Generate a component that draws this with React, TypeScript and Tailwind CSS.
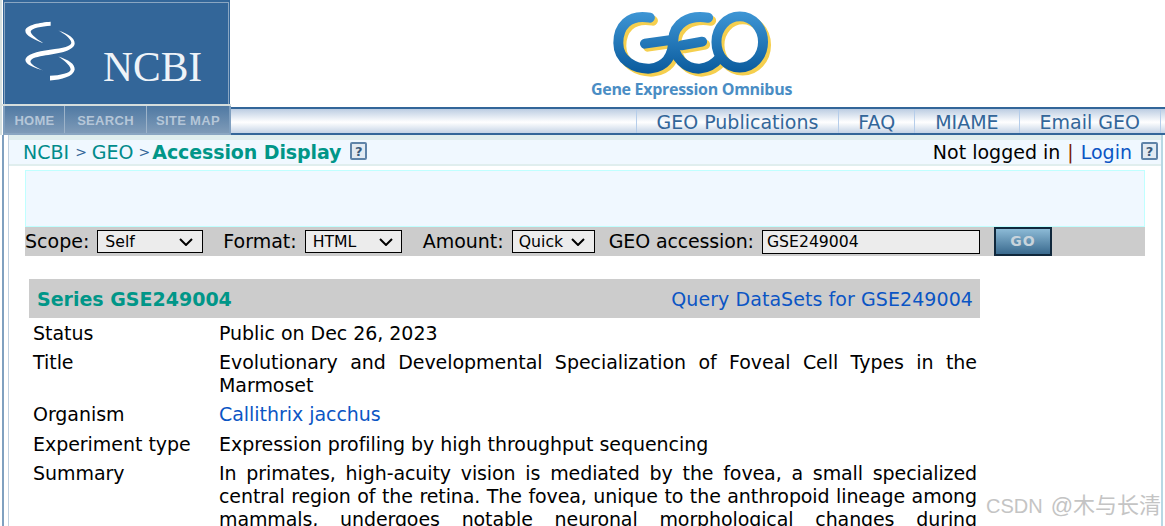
const font = "[font-family:'DejaVu_Sans',Verdana,sans-serif]";

function HelpIcon() {
  return (
    <span className="mb-[2px] inline-flex h-[18px] w-[17px] items-center justify-center rounded-[2px] border-2 border-[#5f83a8] bg-[#e2eaf2] text-[13px] leading-none font-bold text-[#3a5a7a]">
      ?
    </span>
  );
}

function Chevron() {
  return (
    <svg width="14" height="8" viewBox="0 0 14 8" className="shrink-0">
      <path d="M1 1 L7 7 L13 1" fill="none" stroke="#000" strokeWidth="2" />
    </svg>
  );
}

function NcbiLogo() {
  return (
    <div className="ml-[1px] h-[104px] w-[227px] shrink-0 bg-[#336699] pt-[2px] pr-[1px] pl-[1px]">
      <div className="flex h-full items-start border-x border-t border-[#8aa6c2]">
        <svg width="60" height="67" viewBox="60 55 180 200" className="mt-[15px] ml-[15px] shrink-0">
          <g fill="#fff">
            <path d="M152 66 L152 78 C125 80 95 85 92 95 C92 105 115 120 130 130 C105 120 75 108 76 92 C78 76 120 68 152 66 Z" />
            <path d="M175 92 C205 102 225 115 224 132 C220 155 170 162 130 168 C105 172 88 178 92 188 C96 196 115 206 130 212 C105 205 76 195 76 180 C78 165 110 155 150 150 C190 144 214 140 214 128 C212 115 190 100 175 92 Z" />
            <path d="M175 170 C205 180 226 192 224 210 C220 230 185 240 150 242 L150 228 C180 226 212 220 212 208 C210 195 190 180 175 170 Z" />
          </g>
        </svg>
        <span className="mt-[44px] ml-[23px] text-[41.5px] leading-none text-[#eef3f8] [font-family:'Liberation_Serif',serif]">
          NCBI
        </span>
      </div>
    </div>
  );
}

function GeoLogo() {
  const strokes = (
    <>
      <path d="M235 52 C170 40 140 80 140 128 C140 180 190 207 235 205 C280 200 305 170 305 118 L220 130" />
      <path d="M410 52 C350 42 308 70 305 118 C305 175 345 207 385 205 C410 203 430 190 445 172" />
      <path d="M330 135 L392 124" />
      <ellipse cx="505" cy="125" rx="70" ry="77" />
    </>
  );
  return (
    <div className="flex flex-col items-center">
      <svg width="173" height="70" viewBox="100 20 520 210" className="mt-[7px]">
        <defs>
          <linearGradient id="geoBlue" gradientUnits="userSpaceOnUse" x1="0" y1="30" x2="0" y2="220">
            <stop offset="0" stopColor="#3f97d6" />
            <stop offset="1" stopColor="#0a5a9c" />
          </linearGradient>
        </defs>
        <g fill="none" strokeLinecap="round" strokeWidth="30">
          <g stroke="#f5cf4e" transform="translate(9 9)">
            {strokes}
          </g>
          <g stroke="url(#geoBlue)">{strokes}</g>
        </g>
      </svg>
      <span className="mt-[3px] text-[16px] leading-[18px] font-bold tracking-[-0.3px] whitespace-nowrap text-[#4a8dc4] [font-family:'Open_Sans',sans-serif]">
        Gene Expression Omnibus
      </span>
    </div>
  );
}

function Row({ label, children }: { label: string; children: React.ReactNode }) {
  return (
    <div className="flex py-[3.15px] tracking-[-0.04px]">
      <div className="w-[190px] shrink-0 pl-[4px]">{label}</div>
      <div className="w-[758px] text-justify">{children}</div>
    </div>
  );
}

const summaryLines = [
  "In primates, high-acuity vision is mediated by the fovea, a small specialized",
  "central region of the retina. The fovea, unique to the anthropoid lineage among",
  "mammals, undergoes notable neuronal morphological changes during",
];

export default function App() {
  return (
    <div className={`relative h-[526px] w-[1165px] overflow-hidden bg-white text-[19px] leading-[23px] text-black ${font}`}>
      {/* Top banner */}
      <div className="flex h-[104px] border-l-2 border-[#d5e0e0]">
        <NcbiLogo />
        <div className="flex flex-1 justify-center pr-[12px]">
          <GeoLogo />
        </div>
      </div>
      <div className="h-[2px] w-[231px] bg-[#d5dedd]" />

      {/* Nav strip */}
      <div className="flex h-[29px] items-stretch border-l-2 border-[#d5e0e0]">
        <div className="ml-[1px] flex w-[228px] shrink-0 border-x-2 border-b-2 border-x-[#7f9fbf] border-b-[#8aa6c2] bg-[linear-gradient(#4f79a3,#7f9bb8)] text-[13px] leading-[30px] font-bold tracking-[0.3px] text-[#b5c6d8] [font-family:'Liberation_Sans',sans-serif]">
          <div className="w-[60px] border-r border-[#9db3c9] text-center">HOME</div>
          <div className="w-[82px] border-r border-[#9db3c9] text-center">SEARCH</div>
          <div className="flex-1 text-center">SITE MAP</div>
        </div>
        <div className="mt-[1px] flex flex-1 justify-end border-y-2 border-[#336699] bg-[linear-gradient(#bccde2,#ffffff_55%,#c5d4e6)] pr-[4px] leading-[27px] text-[#336699]">
          <div className="border-l border-[#b5cdea] pr-[20px] pl-[19px]">GEO Publications</div>
          <div className="border-l border-[#b5cdea] px-[19px]">FAQ</div>
          <div className="border-l border-[#b5cdea] px-[20px]">MIAME</div>
          <div className="border-x border-[#b5cdea] px-[20px]">Email GEO</div>
        </div>
      </div>

      {/* Framed content */}
      <div className="ml-[2px] h-[391px] w-[1161px] border-x-2 border-l-[#7fa0c0] border-r-[#b8d8e4] pl-[4px]">
        <div className="h-full border-l border-[#c0d0e0]">
          <div className="flex h-[31px] items-center justify-between border-t-[5px] border-b-2 border-t-[#e0eeee] border-b-[#e0eeee] bg-[#f0f8ff] pr-[3px] pl-[14px]">
            <div className="flex items-center">
              <span className="text-[#008b8b]">NCBI</span>
              <span className="mr-[5px] ml-[6px] text-[14px] text-[#336699]">&gt;</span>
              <span className="text-[#008b8b]">GEO</span>
              <span className="mr-[2px] ml-[5px] text-[14px] text-[#336699]">&gt;</span>
              <span className="mr-[9px] font-bold tracking-[-0.1px] text-[#009688]">Accession Display</span>
              <HelpIcon />
            </div>
            <div className="flex items-center">
              <span className="mt-[1px]">Not logged in</span>
              <span className="mx-[7px] mt-[1px] text-[#7a1f00]">|</span>
              <span className="mt-[1px] mr-[9px] text-[#0b55c4]">Login</span>
              <HelpIcon />
            </div>
          </div>

          {/* Search form */}
          <div className="ml-[16px] w-[1120px] pt-[4px]">
            <div className="h-[57px] border border-[#c0ffff] bg-[#f0f8ff]" />
            <div className="flex h-[29px] items-center bg-[#cccccc]">
              <span className="mr-[8px]">Scope:</span>
              <div className="mr-[20px] flex h-[23px] w-[106px] items-center justify-between border border-black bg-[#ececec] pr-[9px] pl-[7px] text-[15.7px]">
                Self <Chevron />
              </div>
              <span className="mr-[8px]">Format:</span>
              <div className="mr-[21px] flex h-[23px] w-[97px] items-center justify-between border border-black bg-[#ececec] pr-[8px] pl-[7px] text-[15.7px]">
                HTML <Chevron />
              </div>
              <span className="mr-[8px]">Amount:</span>
              <div className="mr-[14px] flex h-[23px] w-[83px] items-center justify-between border border-black bg-[#ececec] pr-[9px] pl-[6px] text-[15.7px]">
                Quick <Chevron />
              </div>
              <span className="mr-[8px] tracking-[-0.14px]">GEO accession:</span>
              <div className="mr-[14px] flex h-[24px] w-[218px] items-center border border-black bg-[#ececec] pl-[4px] text-[15.7px]">
                GSE249004
              </div>
              <div className="flex h-[29px] w-[58px] items-center justify-center border-2 border-[#10283c] bg-[linear-gradient(#8cbad6,#3a6a8e)] text-[14px] font-bold tracking-[1px] text-[#c8d4dc]">
                GO
              </div>
            </div>
          </div>

          {/* Series table */}
          <div className="mt-[23px] ml-[20px] w-[951px]">
            <div className="flex h-[39px] items-center justify-between bg-[#cccccc] pt-[1px] pr-[7px] pl-[8px]">
              <span className="font-bold text-[#009688]">Series GSE249004</span>
              <span className="tracking-[0.07px] text-[#0b55c4]">Query DataSets for GSE249004</span>
            </div>
            <div className="pt-[0.55px]">
              <Row label="Status">Public on Dec 26, 2023</Row>
              <Row label="Title">Evolutionary and Developmental Specialization of Foveal Cell Types in the Marmoset</Row>
              <Row label="Organism">
                <span className="text-[#0b55c4]">Callithrix jacchus</span>
              </Row>
              <Row label="Experiment type">Expression profiling by high throughput sequencing</Row>
              <Row label="Summary">
                {summaryLines.map((line) => (
                  <div key={line} className="tracking-[-0.1px] whitespace-nowrap [text-align-last:justify]">
                    {line}
                  </div>
                ))}
              </Row>
            </div>
          </div>
        </div>
      </div>

      {/* Watermark */}
      <div className="absolute top-[493px] left-[986px] flex items-baseline gap-[8px] leading-[26px] whitespace-nowrap text-[#c4c4c4] [font-family:'Liberation_Sans','Noto_Sans_CJK_SC',sans-serif]">
        <span className="text-[20px]">CSDN</span>
        <span className="text-[22px]">@木与长清</span>
      </div>
    </div>
  );
}
